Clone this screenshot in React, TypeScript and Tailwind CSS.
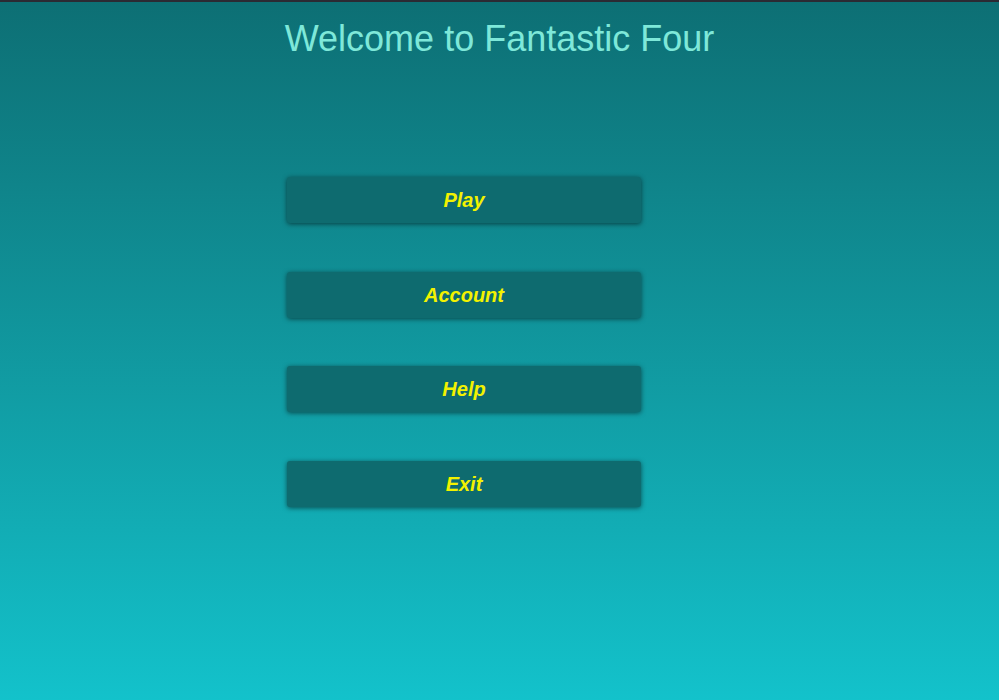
const items = ['Play', 'Account', 'Help', 'Exit'];

export default function App() {
  return (
    <div className="flex h-[700px] w-full flex-col overflow-hidden bg-gradient-to-b from-[#0d6f74] to-[#13c2cb] font-['Liberation_Sans',Arial,sans-serif]">
      <div className="h-[2px] w-full bg-[#2b2a33]" />
      <h1 className="mt-[15px] text-center text-[36px] leading-[44px] text-[#7ee8d9]">Welcome to Fantastic Four</h1>
      <div className="ml-[287px] mt-[116px] flex w-[354px] flex-col gap-[48.5px]">
        {items.map(label => (
          <button
            key={label}
            className="flex h-[46px] items-center justify-center rounded-[3px] bg-[#0e6b6f] text-[20px] font-bold italic text-[#f2f200] shadow-[0_1px_5px_rgba(0,0,0,0.55)]"
          >
            {label}
          </button>
        ))}
      </div>
    </div>
  );
}
